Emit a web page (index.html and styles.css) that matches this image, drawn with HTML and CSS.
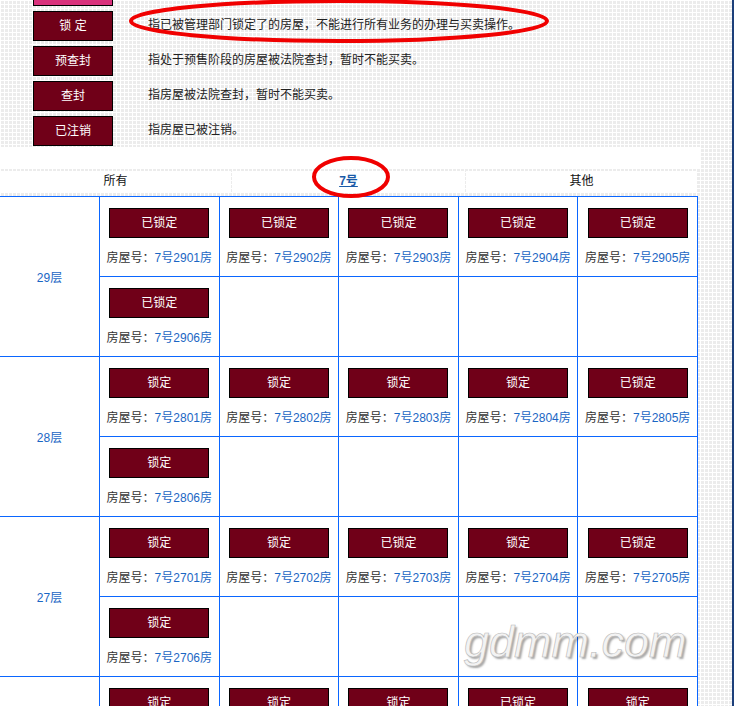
FILE: index.html
```html
<!DOCTYPE html>
<html lang="zh-CN">
<head>
<meta charset="utf-8">
<title>楼盘表</title>
<link rel="stylesheet" href="styles.css">
</head>
<body>
<div class="page">
  <div class="main">
    <div class="legend">
      <div class="legend-row"><span class="state state-pink"></span></div>
      <div class="legend-row"><span class="state">锁&nbsp;定</span><span class="desc">指已被管理部门锁定了的房屋，不能进行所有业务的办理与买卖操作。</span></div>
      <div class="legend-row"><span class="state">预查封</span><span class="desc">指处于预售阶段的房屋被法院查封，暂时不能买卖。</span></div>
      <div class="legend-row"><span class="state">查封</span><span class="desc">指房屋被法院查封，暂时不能买卖。</span></div>
      <div class="legend-row"><span class="state">已注销</span><span class="desc">指房屋已被注销。</span></div>
    </div>
    <div class="band"></div>
    <div class="tabs">
      <div class="tab">所有</div>
      <div class="tab"><a class="tab-link">7号</a></div>
      <div class="tab">其他</div>
    </div>
    <div class="floors">
      <div class="floor">29层</div>
      <div class="room"><span class="btn">已锁定</span><p class="no">房屋号：<a class="link">7号2901房</a></p></div>
      <div class="room"><span class="btn">已锁定</span><p class="no">房屋号：<a class="link">7号2902房</a></p></div>
      <div class="room"><span class="btn">已锁定</span><p class="no">房屋号：<a class="link">7号2903房</a></p></div>
      <div class="room"><span class="btn">已锁定</span><p class="no">房屋号：<a class="link">7号2904房</a></p></div>
      <div class="room"><span class="btn">已锁定</span><p class="no">房屋号：<a class="link">7号2905房</a></p></div>
      <div class="room"><span class="btn">已锁定</span><p class="no">房屋号：<a class="link">7号2906房</a></p></div>
      <div class="room"></div><div class="room"></div><div class="room"></div><div class="room"></div>

      <div class="floor">28层</div>
      <div class="room"><span class="btn">锁定</span><p class="no">房屋号：<a class="link">7号2801房</a></p></div>
      <div class="room"><span class="btn">锁定</span><p class="no">房屋号：<a class="link">7号2802房</a></p></div>
      <div class="room"><span class="btn">锁定</span><p class="no">房屋号：<a class="link">7号2803房</a></p></div>
      <div class="room"><span class="btn">锁定</span><p class="no">房屋号：<a class="link">7号2804房</a></p></div>
      <div class="room"><span class="btn">已锁定</span><p class="no">房屋号：<a class="link">7号2805房</a></p></div>
      <div class="room"><span class="btn">锁定</span><p class="no">房屋号：<a class="link">7号2806房</a></p></div>
      <div class="room"></div><div class="room"></div><div class="room"></div><div class="room"></div>

      <div class="floor">27层</div>
      <div class="room"><span class="btn">锁定</span><p class="no">房屋号：<a class="link">7号2701房</a></p></div>
      <div class="room"><span class="btn">锁定</span><p class="no">房屋号：<a class="link">7号2702房</a></p></div>
      <div class="room"><span class="btn">已锁定</span><p class="no">房屋号：<a class="link">7号2703房</a></p></div>
      <div class="room"><span class="btn">锁定</span><p class="no">房屋号：<a class="link">7号2704房</a></p></div>
      <div class="room"><span class="btn">已锁定</span><p class="no">房屋号：<a class="link">7号2705房</a></p></div>
      <div class="room"><span class="btn">锁定</span><p class="no">房屋号：<a class="link">7号2706房</a></p></div>
      <div class="room"></div><div class="room"></div><div class="room"></div><div class="room"></div>

      <div class="floor">26层</div>
      <div class="room"><span class="btn">锁定</span><p class="no">房屋号：<a class="link">7号2601房</a></p></div>
      <div class="room"><span class="btn">锁定</span><p class="no">房屋号：<a class="link">7号2602房</a></p></div>
      <div class="room"><span class="btn">锁定</span><p class="no">房屋号：<a class="link">7号2603房</a></p></div>
      <div class="room"><span class="btn">已锁定</span><p class="no">房屋号：<a class="link">7号2604房</a></p></div>
      <div class="room"><span class="btn">锁定</span><p class="no">房屋号：<a class="link">7号2605房</a></p></div>
    </div>
  </div>
  <svg class="marks" width="734" height="706" viewBox="0 0 734 706" aria-hidden="true">
    <ellipse cx="339" cy="21" rx="208" ry="20" fill="none" stroke="#f00000" stroke-width="4"/>
    <ellipse cx="351" cy="177" rx="37" ry="19" fill="none" stroke="#f00000" stroke-width="4"/>
  </svg>
  <div class="watermark">gdmm.com</div>
</div>
</body>
</html>
```

FILE: styles.css
```css
html, body {
  margin: 0;
  padding: 0;
  overflow: hidden;
  background: #fff;
}

body {
  font-family: "Liberation Sans", "Noto Sans CJK SC", sans-serif;
  font-size: 12px;
  color: #333;
}

.page {
  position: relative;
  width: 732px;
  height: 706px;
  overflow: hidden;
  border-right: 2px solid #1c3f7a;
  background-color: #ececec;
  background-image:
    linear-gradient(to right, #fff 1px, transparent 1px),
    linear-gradient(to bottom, #fff 1px, transparent 1px);
  background-size: 4px 4px;
}

.main {
  width: 700px;
  display: flex;
  flex-direction: column;
}

/* legend */
.legend {
  margin-top: -24px;
  padding: 0 0 1px 33px;
  display: flex;
  flex-direction: column;
  gap: 5px;
}

.legend-row {
  display: flex;
  align-items: center;
  height: 30px;
}

.state {
  box-sizing: border-box;
  width: 80px;
  height: 30px;
  border: 1px solid #000;
  background: #700018;
  color: #fff;
  text-align: center;
  line-height: 28px;
  font-size: 12px;
  flex: none;
}

.state-pink {
  background: #d9317c;
}

.desc {
  margin: 0 0 6px 35px;
  color: #222;
  white-space: nowrap;
}

/* white band + tabs */
.band {
  height: 21px;
  background: #fff;
}

.tabs {
  width: 697px;
  display: grid;
  grid-template-columns: repeat(3, 1fr);
  column-gap: 2px;
  padding: 3px 0 4px;
}

.tab {
  background: #fff;
  height: 21px;
  line-height: 21px;
  text-align: center;
  color: #111;
}

.tab-link {
  color: #1a5aa8;
  font-weight: bold;
  text-decoration: underline;
}

/* floors table */
.floors {
  box-sizing: border-box;
  width: 698px;
  display: grid;
  grid-template-columns: 99px repeat(5, 1fr);
  grid-auto-rows: 79px;
  gap: 1px;
  padding: 1px 1px 1px 0;
  background: #0a66ff;
}

.floor {
  grid-row: span 2;
  background: #fff;
  color: #1a66c4;
  display: flex;
  align-items: center;
  justify-content: center;
}

.room {
  background: #fff;
  display: flex;
  flex-direction: column;
  align-items: center;
  padding-top: 11px;
  box-sizing: border-box;
}

.btn {
  box-sizing: border-box;
  width: 100px;
  height: 30px;
  border: 1px solid #000;
  background: #700018;
  color: #fff;
  text-align: center;
  line-height: 28px;
}

.no {
  margin: 10px 0 0;
  line-height: 20px;
  color: #333;
  white-space: nowrap;
}

.link {
  color: #1a66c4;
}

/* overlays */
.marks {
  position: absolute;
  left: 0;
  top: 0;
  pointer-events: none;
}

.watermark {
  position: absolute;
  left: 464px;
  top: 620px;
  font-family: "Liberation Sans", sans-serif;
  font-style: italic;
  font-size: 45px;
  line-height: 44px;
  color: #f3f3f3;
  -webkit-text-stroke: 0.6px #b8b8b8;
  text-shadow: 2px 2px 2px rgba(0, 0, 0, 0.35);
  pointer-events: none;
}
```
